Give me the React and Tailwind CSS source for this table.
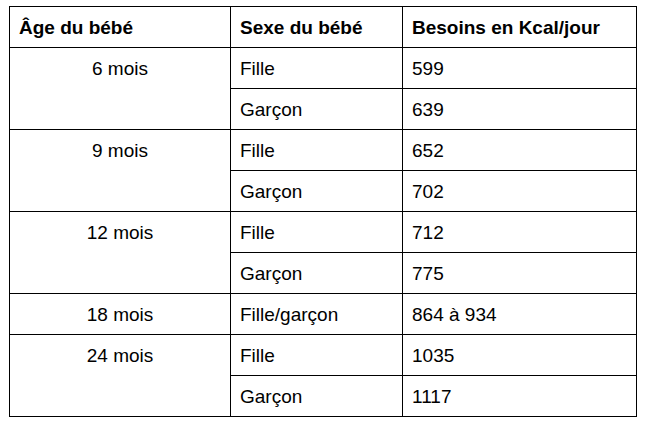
import React from "react";

const groups = [
  { age: "6 mois", rows: [["Fille", "599"], ["Garçon", "639"]] },
  { age: "9 mois", rows: [["Fille", "652"], ["Garçon", "702"]] },
  { age: "12 mois", rows: [["Fille", "712"], ["Garçon", "775"]] },
  { age: "18 mois", rows: [["Fille/garçon", "864 à 934"]] },
  { age: "24 mois", rows: [["Fille", "1035"], ["Garçon", "1117"]] },
];

const cell = "border border-black h-[41px] align-top pt-[10px] px-[9px] leading-[22px]";

const App = () => {
  return (
    <div className="w-[646px] h-[425px] bg-white pt-[6px] pl-[9px] font-['Liberation_Sans',Arial,sans-serif] text-[19px] text-black">
      <table className="border-collapse w-[627px] table-fixed">
        <colgroup>
          <col className="w-[221px]" />
          <col className="w-[172px]" />
          <col className="w-[234px]" />
        </colgroup>
        <thead>
          <tr>
            <th className={`${cell} text-left font-bold`}>Âge du bébé</th>
            <th className={`${cell} text-left font-bold`}>Sexe du bébé</th>
            <th className={`${cell} text-left font-bold`}>Besoins en Kcal/jour</th>
          </tr>
        </thead>
        <tbody>
          {groups.map((g) =>
            g.rows.map(([sexe, kcal], i) => (
              <tr key={g.age + i}>
                {i === 0 && (
                  <td rowSpan={g.rows.length} className={`${cell} text-center`}>
                    {g.age}
                  </td>
                )}
                <td className={cell}>{sexe}</td>
                <td className={cell}>{kcal}</td>
              </tr>
            ))
          )}
        </tbody>
      </table>
    </div>
  );
};

export default App;
